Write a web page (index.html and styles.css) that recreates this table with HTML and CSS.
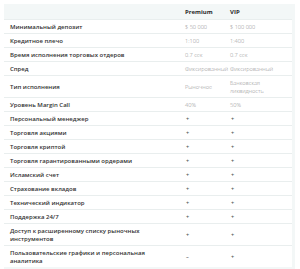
FILE: index.html
```html
<!DOCTYPE html>
<html lang="ru">
<head>
<meta charset="utf-8">
<link rel="stylesheet" href="styles.css">
</head>
<body>
<div class="card">
  <div class="row head">
    <div class="label"></div>
    <div class="col">Premium</div>
    <div class="col">VIP</div>
  </div>
  <div class="row"><div class="label">Минимальный депозит</div><div class="val">$ 50 000</div><div class="val">$ 100 000</div></div>
  <div class="row"><div class="label">Кредитное плечо</div><div class="val">1:100</div><div class="val">1:400</div></div>
  <div class="row"><div class="label">Время исполнения торговых отдеров</div><div class="val">0.7 сек</div><div class="val">0.7 сек</div></div>
  <div class="row"><div class="label">Спред</div><div class="val">Фиксированный</div><div class="val">Фиксированный</div></div>
  <div class="row"><div class="label">Тип исполнения</div><div class="val">Рыночное</div><div class="val">Банковская ликвидность</div></div>
  <div class="row"><div class="label">Уровень Margin Call</div><div class="val">40%</div><div class="val">50%</div></div>
  <div class="row"><div class="label">Персональный менеджер</div><div class="val sign">+</div><div class="val sign">+</div></div>
  <div class="row"><div class="label">Торговля акциями</div><div class="val sign">+</div><div class="val sign">+</div></div>
  <div class="row"><div class="label">Торговля криптой</div><div class="val sign">+</div><div class="val sign">+</div></div>
  <div class="row"><div class="label">Торговля гарантированными ордерами</div><div class="val sign">+</div><div class="val sign">+</div></div>
  <div class="row"><div class="label">Исламский счет</div><div class="val sign">+</div><div class="val sign">+</div></div>
  <div class="row"><div class="label">Страхование вкладов</div><div class="val sign">+</div><div class="val sign">+</div></div>
  <div class="row"><div class="label">Технический индикатор</div><div class="val sign">+</div><div class="val sign">+</div></div>
  <div class="row"><div class="label">Поддержка 24/7</div><div class="val sign">+</div><div class="val sign">+</div></div>
  <div class="row"><div class="label">Доступ к расширенному списку рыночных инструментов</div><div class="val sign">+</div><div class="val sign">+</div></div>
  <div class="row"><div class="label">Пользовательские графики и персональная аналитика</div><div class="val sign">–</div><div class="val sign">+</div></div>
</div>
</body>
</html>
```

FILE: styles.css
```css
html, body {
  margin: 0;
  padding: 0;
  background: #ffffff;
}

.card {
  margin: 4px 5px 0 4px;
  padding: 0 3px 3px 0;
  background: #f3f7f7;
  font-family: "Open Sans", "Noto Sans", sans-serif;
}

.row {
  display: grid;
  grid-template-columns: 181px 45px 1fr;
  align-items: center;
  background: #ffffff;
  border-top: 1px solid #e9eeee;
  padding: 3px 0 2px;
  line-height: 8px;
}

.row.head {
  background: transparent;
  border-top: none;
  height: 15px;
  padding: 0;
  box-sizing: border-box;
}

.label {
  padding-left: 6px;
  font-size: 6px;
  font-weight: 600;
  color: #333333;
  padding-right: 30px;
}

.col {
  font-size: 6px;
  font-weight: 700;
  color: #2a2a2a;
}

.val {
  font-size: 5.6px;
  font-weight: 300;
  color: #8c8c8c;
}

.val.sign {
  font-size: 5.5px;
  font-weight: 600;
  color: #555555;
  padding-left: 1px;
}
```
